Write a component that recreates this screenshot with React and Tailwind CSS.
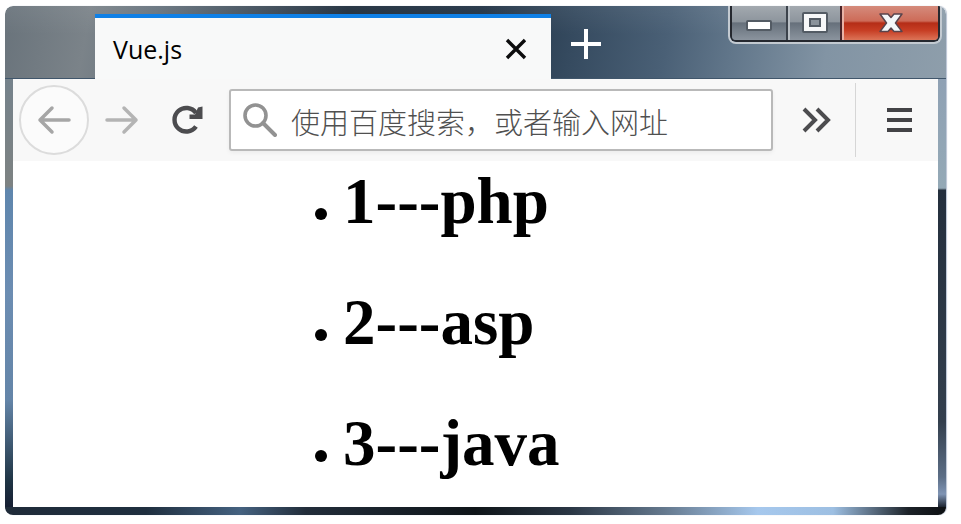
import React from "react";

const items = [
  { id: 1, name: "php" },
  { id: 2, name: "asp" },
  { id: 3, name: "java" },
];

function Tab() {
  return (
    <div className="mt-2 -mb-px ml-[90px] flex w-[456px] items-center justify-between border-t-4 border-[#0f80e6] bg-[#f8f9f9] pr-6 pl-[18px]">
      <span className="font-['Open_Sans','Noto_Sans',sans-serif] text-[25px] leading-8 text-black">
        Vue.js
      </span>
      <button type="button" aria-label="Close tab" className="block">
        <svg width="22" height="22" viewBox="0 0 22 22" fill="none" stroke="#0c0c0d" strokeWidth="3.4">
          <path d="M2 2l18 18M20 2L2 20" />
        </svg>
      </button>
    </div>
  );
}

function WindowButtons() {
  return (
    <div className="flex h-[38px] self-start overflow-hidden rounded-b-lg border-x-2 border-b-2 border-[#c3cad1]">
      <div className="flex overflow-hidden rounded-b-md border-x-2 border-b-2 border-[#25282f]">
        <button
          type="button"
          aria-label="Minimize"
          className="flex w-14 items-end justify-center border-r-2 border-[#3c434c] bg-[linear-gradient(#a3a9af_0%,#8d959d_46%,#66707b_50%,#8b949e_100%)] pb-2"
        >
          <svg width="26" height="12" viewBox="0 0 26 12">
            <rect x="1" y="1" width="24" height="9" rx="1" fill="#fff" stroke="#535b64" strokeWidth="2" />
          </svg>
        </button>
        <button
          type="button"
          aria-label="Maximize"
          className="flex w-[54px] items-center justify-center border-r-2 border-l-2 border-r-[#4b2327] border-l-[#b9bfc5] bg-[linear-gradient(#a3a9af_0%,#8d959d_46%,#66707b_50%,#8b949e_100%)] pb-px"
        >
          <svg width="26" height="22" viewBox="0 0 26 22">
            <rect x="1" y="1" width="24" height="19" rx="1" fill="#f7f8f9" stroke="#535b64" strokeWidth="2" />
            <rect x="8" y="7" width="10" height="7" fill="#8b939b" stroke="#535b64" strokeWidth="2" />
          </svg>
        </button>
        <button
          type="button"
          aria-label="Close window"
          className="flex w-24 items-center justify-center border-l-2 border-[#e9b2a6] bg-[linear-gradient(#d58b7c_0%,#cd6b58_44%,#b52d17_50%,#c73e24_72%,#dc7458_100%)] pb-px"
        >
          <svg width="24" height="22" viewBox="0 0 24 22">
            <path
              d="M1 2h8l3 3.500L15 2h8l-6.500 9 6.500 8.500h-8l-3-3.500-3 3.500H1L7.500 11z"
              fill="#f4f7f9"
              stroke="#59444c"
              strokeWidth="1.500"
              strokeLinejoin="round"
            />
          </svg>
        </button>
      </div>
    </div>
  );
}

function TitleBar() {
  return (
    <header className="flex h-[73px] rounded-t-lg border-b border-[#40566b] bg-[linear-gradient(#ffffff10,#ffffff00_40%),linear-gradient(100deg,#69737b_0%,#7b8389_9%,#65727d_16%,#1d2c3b_36%,#1f3143_50%,#354a5f_60%,#4a6076_70%,#61768a_77%,#8294a4_87%,#8e9eab_100%)]">
      <Tab />
      <button type="button" aria-label="New tab" className="ml-[19px] block self-center pt-1">
        <svg width="32" height="32" viewBox="0 0 32 32" stroke="#fff" strokeWidth="4">
          <path d="M1 16h30M16 1v30" />
        </svg>
      </button>
      <div className="grow" />
      <div className="mr-1 flex">
        <WindowButtons />
      </div>
    </header>
  );
}

function Toolbar() {
  return (
    <div className="flex h-[82px] items-center bg-[#f8f8f8] pl-1.5">
      <button
        type="button"
        aria-label="Back"
        className="flex size-[70px] shrink-0 items-center justify-center rounded-full border-2 border-[#dcdcdc] bg-[#fbfbfb]"
      >
        <svg width="34" height="30" viewBox="0 0 34 30" fill="none" stroke="#a6a6a6" strokeWidth="3.500" strokeLinecap="round" strokeLinejoin="round">
          <path d="M32 15H3M15 3L3 15l12 12" />
        </svg>
      </button>
      <button type="button" aria-label="Forward" className="ml-4 shrink-0">
        <svg width="34" height="30" viewBox="0 0 34 30" fill="none" stroke="#b4b4b4" strokeWidth="3.500" strokeLinecap="round" strokeLinejoin="round">
          <path d="M2 15h29M19 3l12 12-12 12" />
        </svg>
      </button>
      <button type="button" aria-label="Reload" className="ml-8 shrink-0">
        <svg width="34" height="30" viewBox="0 0 34 30" fill="none">
          <path d="M25 21.500A11.800 11.800 0 1 1 25 8" stroke="#4c4c4f" strokeWidth="4.400" />
          <path d="M27 2.500L31.500 1.500V14H18.500V9.500H24z" fill="#4c4c4f" />
        </svg>
      </button>
      <label className="ml-6 flex h-[62px] min-w-0 grow items-center rounded-[3px] border-2 border-[#b9b9b9] bg-white pl-3 shadow-[0_2px_4px_#0000000d]">
        <svg width="34" height="34" viewBox="0 0 34 34" fill="none" stroke="#929292" strokeWidth="3.600" strokeLinecap="round" className="shrink-0" aria-hidden="true">
          <circle cx="12.500" cy="12.500" r="10.500" />
          <path d="M20 20l12 12" strokeWidth="4" />
        </svg>
        <input
          type="text"
          aria-label="地址栏"
          placeholder="使用百度搜索，或者输入网址"
          className="ml-[14px] min-w-0 grow bg-transparent pt-0.5 font-['Noto_Sans_CJK_SC',sans-serif] text-[29px] leading-10 font-light text-[#333] outline-none placeholder:text-[#505050]"
        />
      </label>
      <button type="button" aria-label="More tools" className="ml-7 shrink-0">
        <svg width="32" height="28" viewBox="0 0 32 28" fill="none" stroke="#4c4c4f" strokeWidth="4">
          <path d="M3 3l11 11L3 25M16 3l11 11-11 11" />
        </svg>
      </button>
      <div className="ml-[22px] h-[74px] w-px shrink-0 bg-[#d6d6d6]" />
      <button type="button" aria-label="Menu" className="mr-[26px] ml-[31px] shrink-0">
        <svg width="25" height="26" viewBox="0 0 25 26" fill="#434346">
          <rect x="0" y="1" width="25" height="4" />
          <rect x="0" y="11" width="25" height="4" />
          <rect x="0" y="21" width="25" height="4" />
        </svg>
      </button>
    </div>
  );
}

export default function App() {
  return (
    <div className="h-screen min-h-[524px] bg-white pt-[6px] pr-[15px] pb-[9px] pl-[5px]">
      <div className="flex h-full flex-col overflow-hidden rounded-lg shadow-[1px_0_1px_#b9c3d3]">
        <TitleBar />
        <div className="flex grow">
          <div className="w-2 shrink-0 bg-[linear-gradient(#75828b_0%,#7d8282_25%,#5f86ad_26%,#6c8db2_50%,#6485a8_75%,#1f3444_94%,#171f33_100%)]" />
          <div className="flex min-w-0 grow flex-col bg-white">
            <Toolbar />
            <main className="bg-white pt-1 pl-[302px]">
              <ul className="flex flex-col gap-[49px]">
                {items.map((item) => (
                  <li
                    key={item.id}
                    className="flex items-end font-['Liberation_Serif','Times_New_Roman',serif] text-[65px] leading-[72px] font-bold text-black"
                  >
                    <span className="mr-4 mb-[17px] size-3 rounded-full bg-black" aria-hidden="true" />
                    <span>
                      {item.id}---{item.name}
                    </span>
                  </li>
                ))}
              </ul>
            </main>
          </div>
          <div className="w-2 shrink-0 bg-[linear-gradient(#8fa1b4_0%,#94a9b6_25.500%,#242f3d_26%,#333f4d_80%,#5c6e86_93%,#7f94b4_97%,#1c2430_100%)]" />
        </div>
        <div className="h-2 shrink-0 bg-[linear-gradient(90deg,#1f2b39_0%,#1f2f3f_15%,#456280_25%,#222d3a_32%,#0f1519_50%,#2a3644_60%,#64788d_70%,#a6c8ed_80%,#9dbfe2_88%,#1c2228_96%,#0c0f12_100%)]" />
      </div>
    </div>
  );
}
